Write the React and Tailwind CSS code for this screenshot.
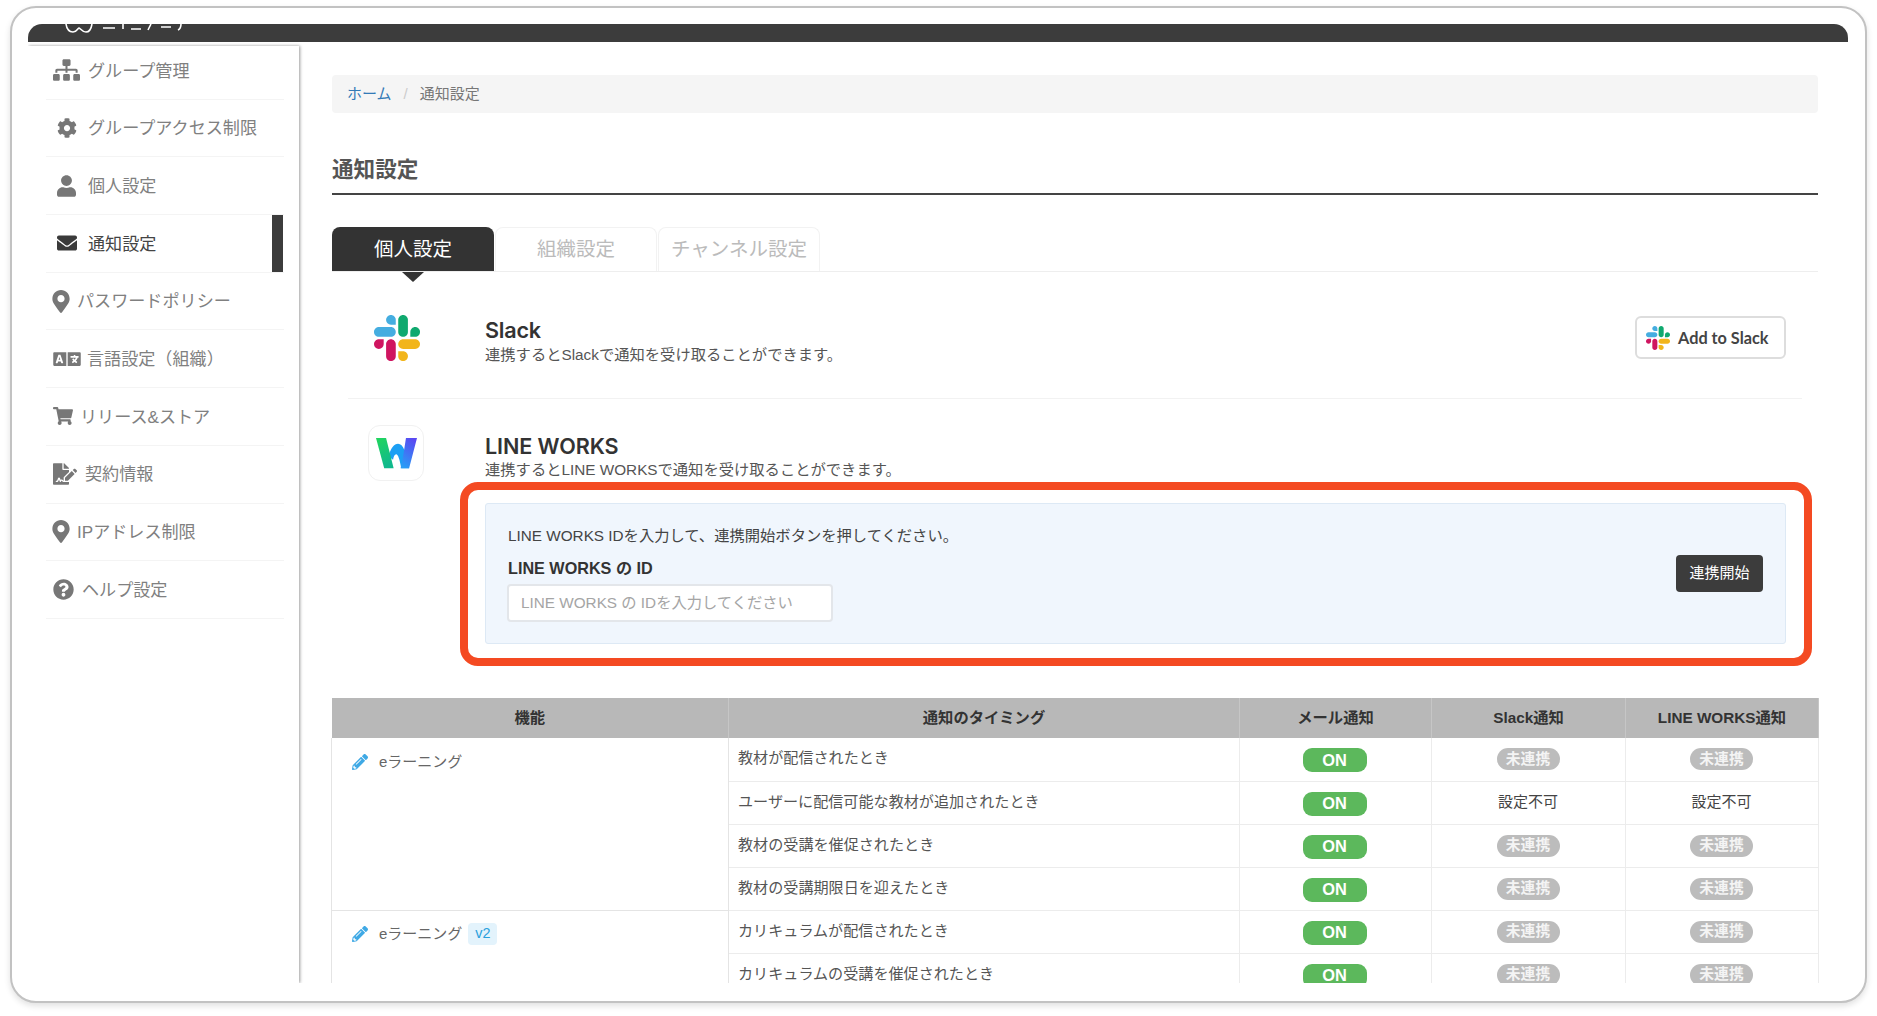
import {
  FaCog,
  FaEnvelope,
  FaFileSignature,
  FaLanguage,
  FaMapMarkerAlt,
  FaPencilAlt,
  FaQuestionCircle,
  FaShoppingCart,
  FaSitemap,
  FaUser,
} from "react-icons/fa";

const FONT = "font-['Liberation_Sans','Noto_Sans_CJK_JP',sans-serif]";

const MENU = [
  { label: "グループ管理", Icon: FaSitemap, box: "w-[27px] mr-[8px]", icon: "w-[27px] h-[22px]" },
  { label: "グループアクセス制限", Icon: FaCog, box: "w-[27px] mr-[8px]", icon: "w-[20px] h-[20px]" },
  { label: "個人設定", Icon: FaUser, box: "w-[27px] mr-[8px]", icon: "w-[19px] h-[22px]" },
  { label: "通知設定", Icon: FaEnvelope, box: "w-[27px] mr-[8px]", icon: "w-[24px] h-[20px]", active: true },
  { label: "パスワードポリシー", Icon: FaMapMarkerAlt, box: "w-[16px] mr-[8px]", icon: "w-[18px] h-[23px] shrink-0" },
  { label: "言語設定（組織）", Icon: FaLanguage, box: "w-[27px] mr-[7px]", icon: "w-[28px] h-[22px] shrink-0" },
  { label: "リリース&ストア", Icon: FaShoppingCart, box: "w-[19px] mr-[8px]", icon: "w-[20px] h-[18px] shrink-0" },
  { label: "契約情報", Icon: FaFileSignature, box: "w-[24px] mr-[8px]", icon: "w-[24px] h-[22px]" },
  { label: "IPアドレス制限", Icon: FaMapMarkerAlt, box: "w-[16px] mr-[8px]", icon: "w-[18px] h-[23px] shrink-0" },
  { label: "ヘルプ設定", Icon: FaQuestionCircle, box: "w-[21px] mr-[8px]", icon: "w-[21px] h-[21px]" },
];

const ROWS = [
  { timing: "教材が配信されたとき", slack: false },
  { timing: "ユーザーに配信可能な教材が追加されたとき", slack: null },
  { timing: "教材の受講を催促されたとき", slack: false },
  { timing: "教材の受講期限日を迎えたとき", slack: false },
  { timing: "カリキュラムが配信されたとき", slack: false },
  { timing: "カリキュラムの受講を催促されたとき", slack: false },
];

function SlackLogo({ className }) {
  return (
    <svg viewBox="0 0 122.8 122.8" className={className}>
      <path fill="#CF1560" d="M25.8 77.6c0 7.1-5.8 12.9-12.9 12.9S0 84.7 0 77.6s5.8-12.9 12.9-12.9h12.9v12.9z" />
      <path fill="#CF1560" d="M32.3 77.6c0-7.1 5.8-12.9 12.9-12.9s12.9 5.8 12.9 12.9v32.3c0 7.1-5.8 12.9-12.9 12.9s-12.9-5.8-12.9-12.9V77.6z" />
      <path fill="#45ADE0" d="M45.2 25.8c-7.1 0-12.9-5.8-12.9-12.9S38.1 0 45.2 0s12.9 5.8 12.9 12.9v12.9H45.2z" />
      <path fill="#45ADE0" d="M45.2 32.3c7.1 0 12.9 5.8 12.9 12.9s-5.8 12.9-12.9 12.9H12.9C5.8 58.1 0 52.3 0 45.2s5.8-12.9 12.9-12.9h32.3z" />
      <path fill="#10A96F" d="M97 45.2c0-7.1 5.8-12.9 12.9-12.9s12.9 5.8 12.9 12.9-5.8 12.9-12.9 12.9H97V45.2z" />
      <path fill="#10A96F" d="M90.5 45.2c0 7.1-5.8 12.9-12.9 12.9s-12.9-5.8-12.9-12.9V12.9C64.7 5.8 70.5 0 77.6 0s12.9 5.8 12.9 12.9v32.3z" />
      <path fill="#F2B51B" d="M77.6 97c7.1 0 12.9 5.8 12.9 12.9s-5.8 12.9-12.9 12.9-12.9-5.8-12.9-12.9V97h12.9z" />
      <path fill="#F2B51B" d="M77.6 90.5c-7.1 0-12.9-5.8-12.9-12.9s5.8-12.9 12.9-12.9h32.3c7.1 0 12.9 5.8 12.9 12.9s-5.8 12.9-12.9 12.9H77.6z" />
    </svg>
  );
}

function WorksLogo() {
  return (
    <svg viewBox="0 0 130 80" preserveAspectRatio="none" className="w-[41px] h-[31px]">
      <defs>
        <linearGradient id="lwGreen" x1="0" y1="0" x2="0.4" y2="1">
          <stop offset="0" stopColor="#22d65c" />
          <stop offset="1" stopColor="#10b98c" />
        </linearGradient>
        <linearGradient id="lwPurple" x1="0.7" y1="0" x2="0.3" y2="1">
          <stop offset="0" stopColor="#5a48f2" />
          <stop offset="1" stopColor="#2a9cf6" />
        </linearGradient>
      </defs>
      <path fill="#1c9ff4" d="M40 48C46 26 58 15 70 15c16 0 26 22 35 63H80C75 55 70 42 64 42c-5 0-8 6-10 14z" />
      <path fill="url(#lwGreen)" d="M0 0h32l24 78H26z" />
      <path fill="url(#lwPurple)" d="M95 0h35l-25 78H78c8-26 12-52 17-78z" />
    </svg>
  );
}

function Sidebar() {
  return (
    <aside className="w-[271px] shrink-0 mt-[4px] pl-[18px] pr-[15px] bg-white shadow-[1px_0_3px_rgba(0,0,0,0.4)]">
      <ul className="-mt-[4px]">
        {MENU.map(({ label, Icon, box, icon, active }) => (
          <li key={label} className="flex h-[57.7px] items-stretch border-b border-[#f4f4f4] pl-[7px]">
            <div className={`flex items-center justify-center ${box}`}>
              <Icon className={`${icon} ${active ? "text-[#3a3a3a]" : "text-[#777]"}`} />
            </div>
            <span className={`flex items-center pt-[2px] text-[17.1px] ${active ? "text-[#444]" : "text-[#808080]"}`}>{label}</span>
            {active && <span className="ml-auto mr-[1px] w-[11px] bg-[#3c3c3c]" />}
          </li>
        ))}
      </ul>
    </aside>
  );
}

function Tabs() {
  return (
    <div className="flex h-[45px] gap-[1px] border-b border-[#eeeeee]">
      <div className="relative flex w-[162px] items-center justify-center rounded-t-[8px] bg-[#333] pt-[1px] text-[19.5px] text-white">
        個人設定
        <span className="absolute left-[70px] top-[45px] h-0 w-0 border-x-[11px] border-t-[10px] border-x-transparent border-t-[#333]" />
      </div>
      <div className="flex w-[162px] items-center justify-center rounded-t-[8px] border border-b-0 border-[#f2f2f2] text-[19.5px] text-[#bbb]">
        組織設定
      </div>
      <div className="flex w-[162px] items-center justify-center rounded-t-[8px] border border-b-0 border-[#f2f2f2] text-[19.5px] text-[#bbb]">
        チャンネル設定
      </div>
    </div>
  );
}

function Integrations() {
  return (
    <div className="ml-[16px] mr-[16px]">
      <div className="flex h-[127px] items-start border-b border-[#f2f2f2] pt-[43px]">
        <SlackLogo className="ml-[26px] h-[46px] w-[46px] shrink-0" />
        <div className="ml-[65px]">
          <h3 className="-mb-[2px] font-['Inter',sans-serif] text-[21.6px] font-semibold leading-[30px] tracking-[-0.2px] text-[#333]">Slack</h3>
          <p className="text-[15.3px] leading-[24px] text-[#555]">連携するとSlackで通知を受け取ることができます。</p>
        </div>
        <button className="ml-auto mr-[16px] mt-[1px] flex h-[43px] w-[151px] items-center rounded-[6px] border-2 border-[#dddddd] bg-white pl-[9px] pt-[1px] font-['Lato',sans-serif] text-[16.3px] font-bold text-[#444]">
          <SlackLogo className="mr-[8px] h-[24px] w-[24px]" />
          Add to Slack
        </button>
      </div>

      <div className="flex items-start pt-[26px]">
        <div className="ml-[20px] flex h-[56px] w-[56px] shrink-0 items-center justify-center rounded-[12px] border border-[#f1f1f1] bg-white">
          <WorksLogo />
        </div>
        <div className="ml-[61px] mr-[16px] flex-1">
          <h3 className="mt-[6px] -mb-[2px] font-['Inter',sans-serif] text-[21.6px] font-semibold leading-[30px] tracking-[-0.1px] text-[#333]">LINE WORKS</h3>
          <p className="text-[15.3px] leading-[22px] text-[#555]">連携するとLINE WORKSで通知を受け取ることができます。</p>
          <div className="relative mt-[22px] flex h-[141px] items-center justify-between rounded-[3px] border border-[#dde9f5] bg-[#f0f6fd] pl-[22px] pr-[22px]">
            <div>
              <p className="text-[15.3px] leading-[22px] text-[#444]">LINE WORKS IDを入力して、連携開始ボタンを押してください。</p>
              <label className="mt-[10px] block text-[16.2px] font-bold leading-[22px] text-[#333]">LINE WORKS の ID</label>
              <input
                readOnly
                placeholder="LINE WORKS の IDを入力してください"
                className="-ml-[1px] mt-[5px] block h-[38px] w-[326px] rounded-[4px] border-2 border-[#e3e6ea] bg-white pl-[12px] text-[15.3px] outline-none placeholder:text-[#a5a5a5]"
              />
            </div>
            <button className="h-[37px] w-[87px] rounded-[4px] bg-[#3c3c3c] text-[15px] text-white">連携開始</button>
            <div className="absolute -bottom-[23px] -left-[26px] -right-[27px] -top-[22px] rounded-[18px] border-[8px] border-[#f44a22]" />
          </div>
        </div>
      </div>
    </div>
  );
}

function OnPill() {
  return (
    <span className="inline-flex h-[24px] w-[64px] items-center justify-center rounded-[9px] bg-[#5cb85c] text-[16.4px] font-bold leading-none text-white">
      ON
    </span>
  );
}

function LinkCell({ value }) {
  if (value === null) return <span className="text-[15px] text-[#444]">設定不可</span>;
  return (
    <span className="inline-flex h-[22px] w-[63px] items-center justify-center rounded-full bg-[#bcbcbc] text-[14.8px] font-bold leading-none text-[#f4f4f4]">
      未連携
    </span>
  );
}

function Feature({ badge, pad }) {
  return (
    <div className={`flex items-center pl-[20px] ${pad}`}>
      <FaPencilAlt className="mr-[11px] h-[16px] w-[16px] text-[#3fa9e5]" />
      <span className="text-[15px] leading-[22px] text-[#666]">eラーニング</span>
      {badge && (
        <span className="ml-[6px] flex h-[22px] w-[29px] items-center justify-center rounded-[4px] bg-[#e3f3fc] text-[14.4px] text-[#2aa0dd]">
          {badge}
        </span>
      )}
    </div>
  );
}

function NotifyTable() {
  const th = "border-r border-[#c6c6c6] pt-[1px] text-center text-[15.3px] font-bold text-[#333]";
  const td = "border-b border-r border-[#ececec] p-0 text-center align-middle";
  return (
    <table className="-ml-[1px] mt-[54px] w-[1487px] table-fixed border-collapse">
      <colgroup>
        <col className="w-[397px]" />
        <col className="w-[511px]" />
        <col className="w-[192px]" />
        <col className="w-[194px]" />
        <col className="w-[193px]" />
      </colgroup>
      <thead>
        <tr className="h-[40px] bg-[#b8b8b8]">
          <th className={th}>機能</th>
          <th className={th}>通知のタイミング</th>
          <th className={th}>メール通知</th>
          <th className={th}>Slack通知</th>
          <th className={th}>LINE WORKS通知</th>
        </tr>
      </thead>
      <tbody>
        {ROWS.map((row, i) => (
          <tr key={row.timing} className="h-[43px]">
            {i === 0 && (
              <td rowSpan={4} className="border-b border-l border-r border-[#e4e4e4] p-0 align-top">
                <Feature pad="pt-[13px]" />
              </td>
            )}
            {i === 4 && (
              <td rowSpan={2} className="border-l border-r border-[#e4e4e4] p-0 align-top">
                <Feature badge="v2" pad="pt-[12px]" />
              </td>
            )}
            <td className="border-b border-r border-[#ececec] p-0 pb-[1px] pl-[9px] text-[15.1px] text-[#555]">{row.timing}</td>
            <td className={td}>
              <div className="flex items-center justify-center pr-[2px] pt-[2px]">
                <OnPill />
              </div>
            </td>
            <td className={td}>
              <div className="flex items-center justify-center pr-[1px]">
                <LinkCell value={row.slack} />
              </div>
            </td>
            <td className={td}>
              <div className="flex items-center justify-center pr-[1px]">
                <LinkCell value={row.slack} />
              </div>
            </td>
          </tr>
        ))}
      </tbody>
    </table>
  );
}

export default function App() {
  return (
    <div className={`h-[1016px] w-[1877px] overflow-hidden bg-white pl-[10px] pt-[6px] ${FONT}`}>
      <div className="h-[997px] w-[1857px] rounded-[26px] border-2 border-[#c2c2c2] bg-white pl-[16px] pr-[17px] pt-[16px] shadow-[0_3px_6px_rgba(0,0,0,0.12)]">
        <header className="h-[18px] overflow-hidden rounded-t-[14px] bg-[#3c3c3c] pl-[37px]">
          <svg viewBox="0 0 130 10" className="h-[10px] w-[130px]" fill="none" stroke="#fff" strokeWidth="1.6">
            <path d="M1 0c1 7 4 8 7 8 4 0 5-4 6-4s3 4 7 4c3 0 5-2 6-8" />
            <path d="M38 4h12M58 0v5M66 5h10M86 0l-3 6M96 3h10M116 0c0 3-1 5-3 6" />
          </svg>
        </header>
        <div className="flex h-[941px] overflow-hidden">
          <Sidebar />
          <main className="min-w-0 flex-1 pl-[33px] pr-[30px]">
            <nav className="mt-[33px] flex h-[38px] items-center rounded-[4px] bg-[#f5f5f5] pl-[15px] pt-[1px] text-[15px]">
              <a className="text-[#337ab7]">ホーム</a>
              <span className="mx-[12px] text-[#ccc]">/</span>
              <span className="text-[#777]">通知設定</span>
            </nav>
            <h2 className="mt-[40px] border-b-2 border-[#444] pb-[7px] pt-[1px] text-[21.6px] font-bold leading-[32px] text-[#555]">通知設定</h2>
            <div className="mt-[32px]">
              <Tabs />
            </div>
            <Integrations />
            <NotifyTable />
          </main>
        </div>
      </div>
    </div>
  );
}
